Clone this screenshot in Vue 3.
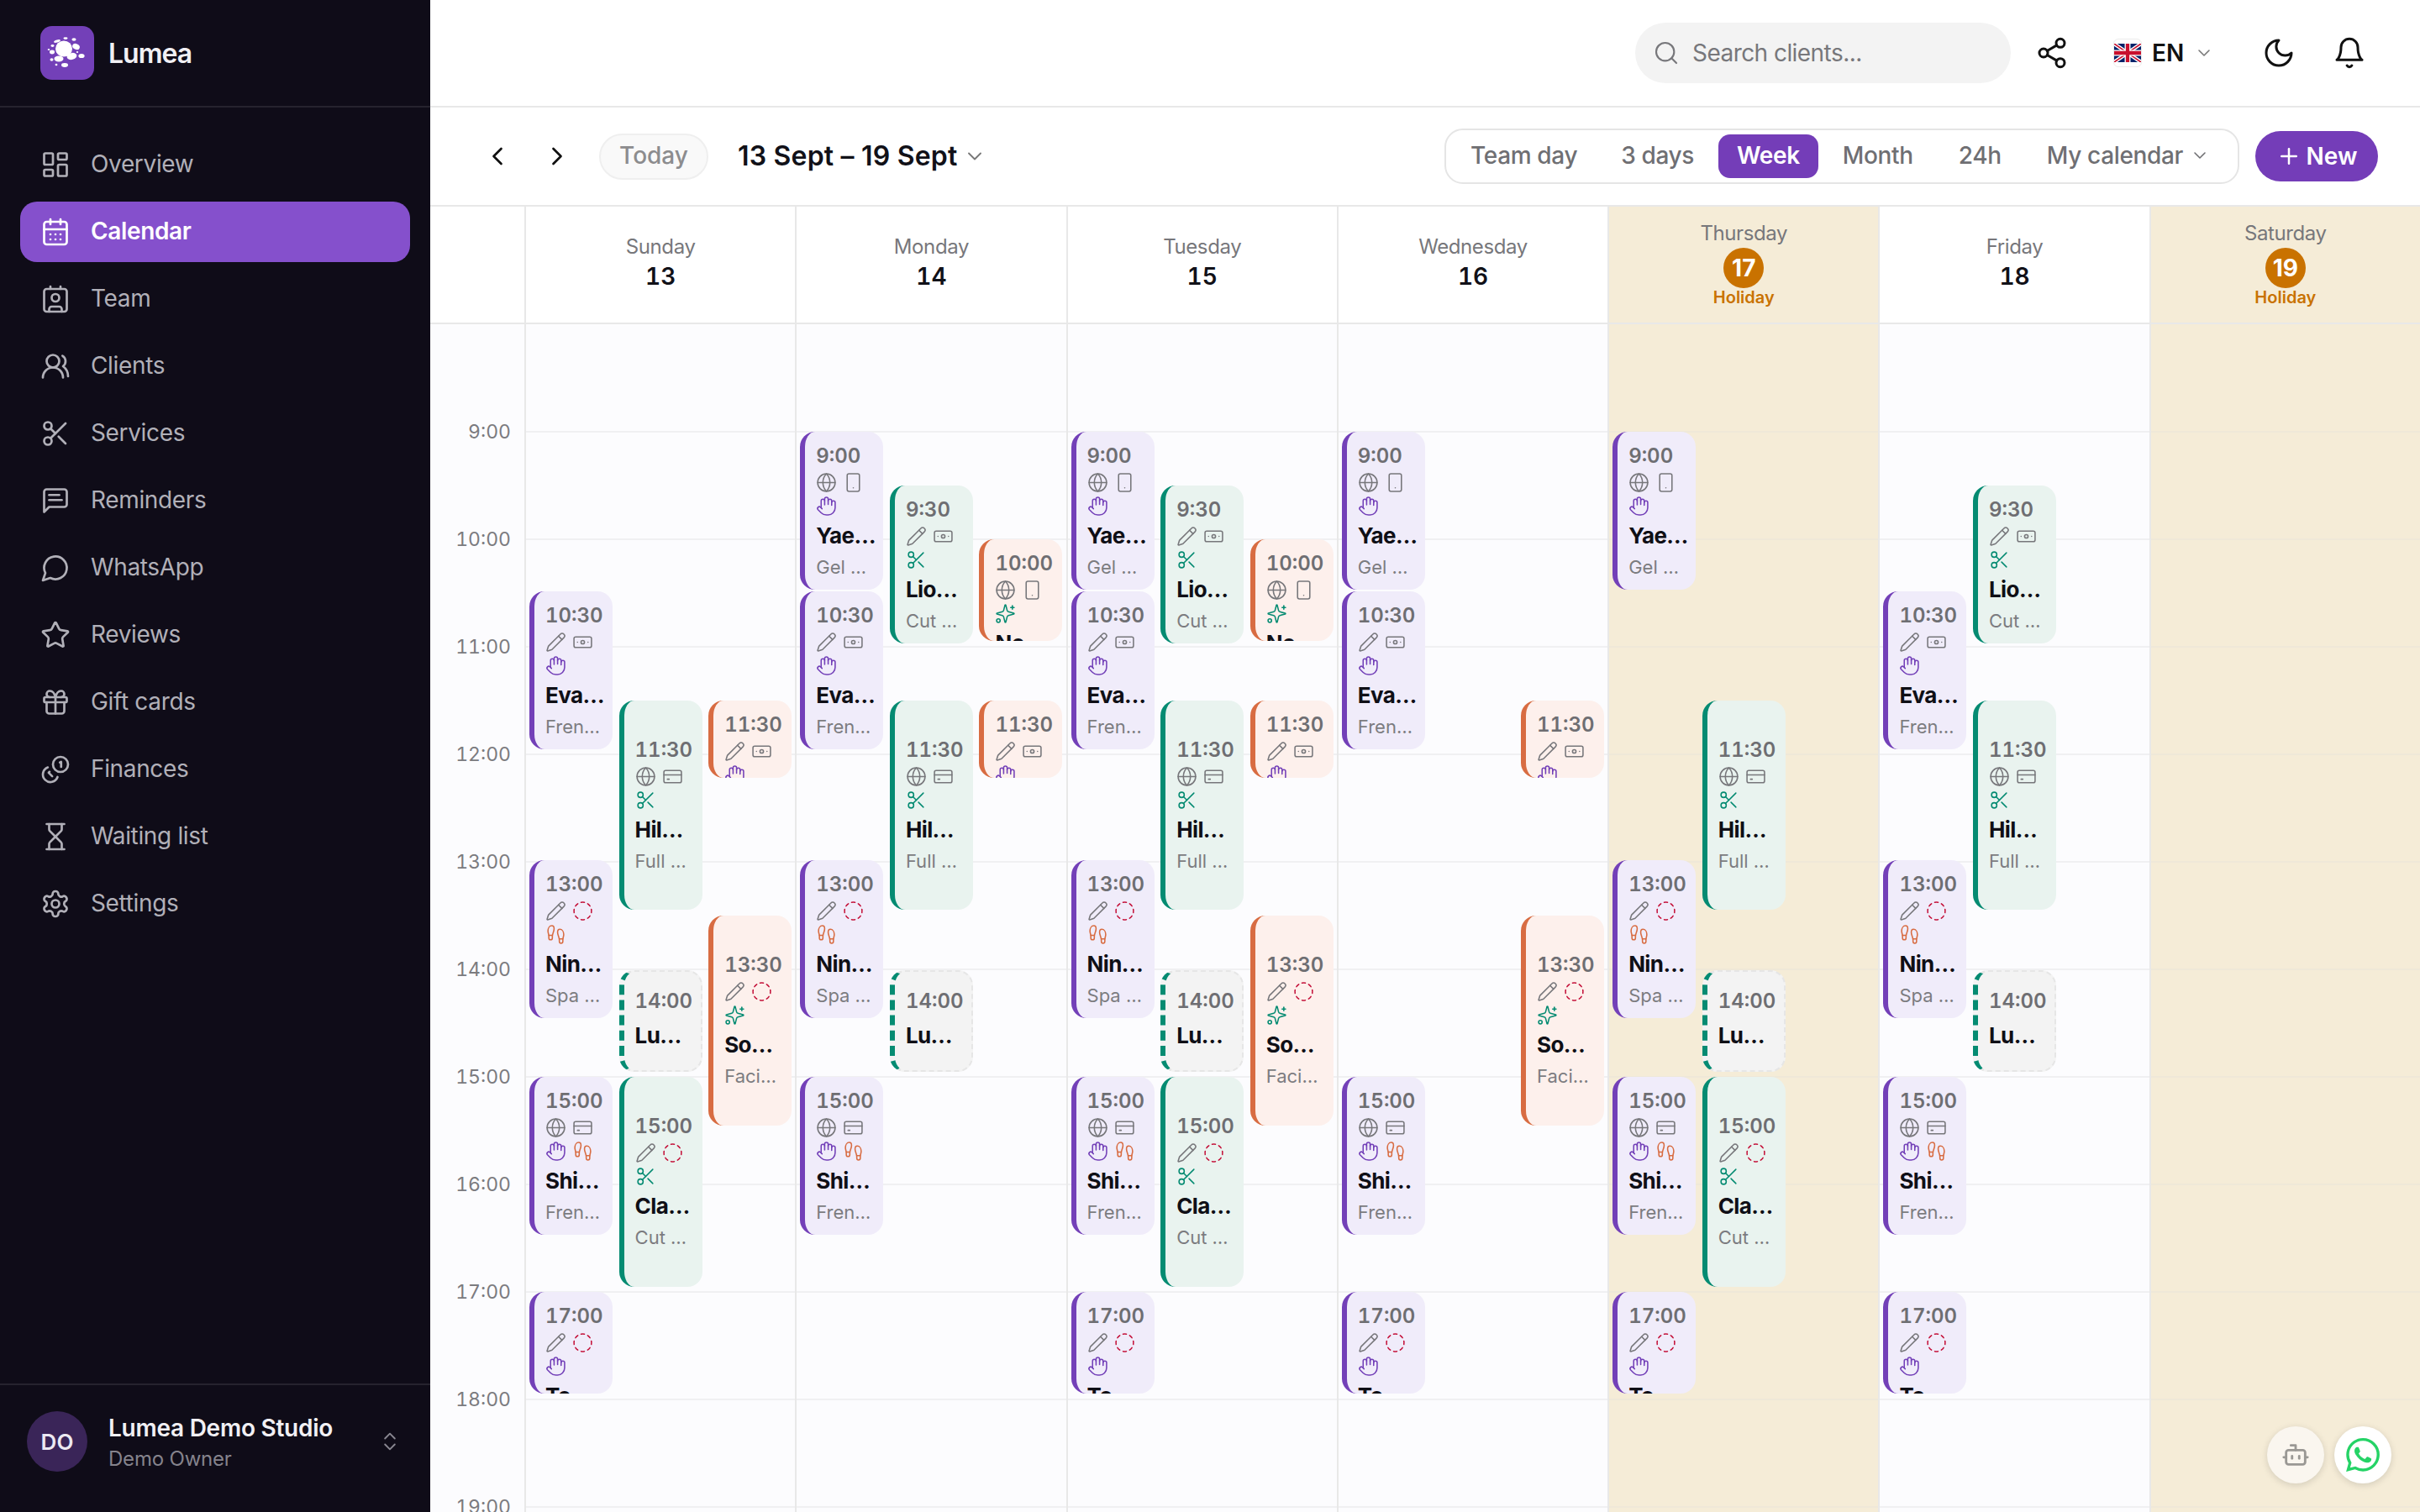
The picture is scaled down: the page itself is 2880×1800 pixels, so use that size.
<script setup>
const icons = {
  overview: ['M4 3h5a1 1 0 0 1 1 1v7a1 1 0 0 1-1 1H4a1 1 0 0 1-1-1V4a1 1 0 0 1 1-1z', 'M15 3h5a1 1 0 0 1 1 1v3a1 1 0 0 1-1 1h-5a1 1 0 0 1-1-1V4a1 1 0 0 1 1-1z', 'M15 12h5a1 1 0 0 1 1 1v7a1 1 0 0 1-1 1h-5a1 1 0 0 1-1-1v-7a1 1 0 0 1 1-1z', 'M4 16h5a1 1 0 0 1 1 1v3a1 1 0 0 1-1 1H4a1 1 0 0 1-1-1v-3a1 1 0 0 1 1-1z'],
  calendar: ['M8 2v4', 'M16 2v4', 'M5 4h14a2 2 0 0 1 2 2v14a2 2 0 0 1-2 2H5a2 2 0 0 1-2-2V6a2 2 0 0 1 2-2z', 'M3 10h18', 'M8 14h.01', 'M12 14h.01', 'M16 14h.01', 'M8 18h.01', 'M12 18h.01', 'M16 18h.01'],
  team: ['M16 2v2', 'M7 22v-2a2 2 0 0 1 2-2h6a2 2 0 0 1 2 2v2', 'M8 2v2', 'M12 8a3 3 0 1 1 0 6 3 3 0 0 1 0-6z', 'M5 4h14a2 2 0 0 1 2 2v14a2 2 0 0 1-2 2H5a2 2 0 0 1-2-2V6a2 2 0 0 1 2-2z'],
  clients: ['M18 21a8 8 0 0 0-16 0', 'M10 3a5 5 0 1 1 0 10 5 5 0 0 1 0-10z', 'M22 20c0-3.37-2-6.5-4-8a5 5 0 0 0-.45-8.3'],
  scissors: ['M6 3a3 3 0 1 1 0 6 3 3 0 0 1 0-6z', 'M6 15a3 3 0 1 1 0 6 3 3 0 0 1 0-6z', 'M20 4 8.12 15.88', 'M14.47 14.48 20 20', 'M8.12 8.12 12 12'],
  reminders: ['M21 15a2 2 0 0 1-2 2H7l-4 4V5a2 2 0 0 1 2-2h14a2 2 0 0 1 2 2z', 'M15 7.5H7', 'M17 11.5H7'],
  whatsapp: ['M7.9 20A9 9 0 1 0 4 16.1L2 22Z'],
  star: ['M11.525 2.295a.53.53 0 0 1 .95 0l2.31 4.679a2.123 2.123 0 0 0 1.595 1.16l5.166.756a.53.53 0 0 1 .294.904l-3.736 3.638a2.123 2.123 0 0 0-.611 1.878l.882 5.14a.53.53 0 0 1-.771.56l-4.618-2.428a2.122 2.122 0 0 0-1.973 0L6.396 21.01a.53.53 0 0 1-.77-.56l.881-5.139a2.122 2.122 0 0 0-.611-1.879L2.16 9.795a.53.53 0 0 1 .294-.906l5.165-.755a2.122 2.122 0 0 0 1.597-1.16z'],
  gift: ['M4 8h16a1 1 0 0 1 1 1v2a1 1 0 0 1-1 1H4a1 1 0 0 1-1-1V9a1 1 0 0 1 1-1z', 'M12 8v13', 'M19 12v7a2 2 0 0 1-2 2H7a2 2 0 0 1-2-2v-7', 'M7.5 8a2.5 2.5 0 0 1 0-5A4.8 8 0 0 1 12 8a4.8 8 0 0 1 4.5-5 2.5 2.5 0 0 1 0 5'],
  coins: ['M16 2a6 6 0 1 1 0 12 6 6 0 0 1 0-12z', 'M5.91 10.37A6 6 0 1 0 13.66 18', 'M15.5 6.5 16.5 6v4', 'M7.29 13.88l-.7.71 2.82 2.82'],
  hourglass: ['M5 22h14', 'M5 2h14', 'M17 22v-4.172a2 2 0 0 0-.586-1.414L12 12l-4.414 4.414A2 2 0 0 0 7 17.828V22', 'M7 2v4.172a2 2 0 0 0 .586 1.414L12 12l4.414-4.414A2 2 0 0 0 17 6.172V2'],
  settings: ['M12.22 2h-.44a2 2 0 0 0-2 2v.18a2 2 0 0 1-1 1.73l-.43.25a2 2 0 0 1-2 0l-.15-.08a2 2 0 0 0-2.73.73l-.22.38a2 2 0 0 0 .73 2.73l.15.1a2 2 0 0 1 1 1.72v.51a2 2 0 0 1-1 1.74l-.15.09a2 2 0 0 0-.73 2.73l.22.38a2 2 0 0 0 2.73.73l.15-.08a2 2 0 0 1 2 0l.43.25a2 2 0 0 1 1 1.73V20a2 2 0 0 0 2 2h.44a2 2 0 0 0 2-2v-.18a2 2 0 0 1 1-1.73l.43-.25a2 2 0 0 1 2 0l.15.08a2 2 0 0 0 2.73-.73l.22-.39a2 2 0 0 0-.73-2.73l-.15-.08a2 2 0 0 1-1-1.74v-.5a2 2 0 0 1 1-1.74l.15-.09a2 2 0 0 0 .73-2.73l-.22-.38a2 2 0 0 0-2.73-.73l-.15.08a2 2 0 0 1-2 0l-.43-.25a2 2 0 0 1-1-1.73V4a2 2 0 0 0-2-2z', 'M12 9a3 3 0 1 1 0 6 3 3 0 0 1 0-6z'],
  search: ['M11 3a8 8 0 1 1 0 16 8 8 0 0 1 0-16z', 'm21 21-4.3-4.3'],
  share: ['M18 2a3 3 0 1 1 0 6 3 3 0 0 1 0-6z', 'M6 9a3 3 0 1 1 0 6 3 3 0 0 1 0-6z', 'M18 16a3 3 0 1 1 0 6 3 3 0 0 1 0-6z', 'm8.59 13.51 6.83 3.98', 'm15.41 6.51-6.82 3.98'],
  moon: ['M12 3a6 6 0 0 0 9 9 9 9 0 1 1-9-9Z'],
  bell: ['M6 8a6 6 0 0 1 12 0c0 7 3 9 3 9H3s3-2 3-9', 'M10.3 21a1.94 1.94 0 0 0 3.4 0'],
  down: ['m6 9 6 6 6-6'],
  left: ['m15 18-6-6 6-6'],
  right: ['m9 18 6-6-6-6'],
  updown: ['m7 15 5 5 5-5', 'm7 9 5-5 5 5'],
  plus: ['M5 12h14', 'M12 5v14'],
  globe: ['M12 2a10 10 0 1 1 0 20 10 10 0 0 1 0-20z', 'M12 2a14.5 14.5 0 0 0 0 20 14.5 14.5 0 0 0 0-20', 'M2 12h20'],
  tablet: ['M7 2h10a2 2 0 0 1 2 2v16a2 2 0 0 1-2 2H7a2 2 0 0 1-2-2V4a2 2 0 0 1 2-2z', 'M12 18h.01'],
  pencil: ['M21.174 6.812a1 1 0 0 0-3.986-3.987L3.842 16.174a2 2 0 0 0-.5.83l-1.321 4.352a.5.5 0 0 0 .623.622l4.353-1.32a2 2 0 0 0 .83-.497z', 'm15 5 4 4'],
  cash: ['M4 6h16a2 2 0 0 1 2 2v8a2 2 0 0 1-2 2H4a2 2 0 0 1-2-2V8a2 2 0 0 1 2-2z', 'M12 10a2 2 0 1 1 0 4 2 2 0 0 1 0-4z', 'M6 12h.01', 'M18 12h.01'],
  card: ['M4 5h16a2 2 0 0 1 2 2v10a2 2 0 0 1-2 2H4a2 2 0 0 1-2-2V7a2 2 0 0 1 2-2z', 'M2 10h20', 'M6 15h2'],
  hand: ['M18 11V6a2 2 0 0 0-4 0', 'M14 10V4a2 2 0 0 0-4 0v2', 'M10 10.5V6a2 2 0 0 0-4 0v8', 'M18 8a2 2 0 1 1 4 0v6a8 8 0 0 1-8 8h-2c-2.8 0-4.5-.86-5.99-2.34l-3.6-3.6a2 2 0 0 1 2.83-2.82L7 15'],
  feet: ['M4 16v-2.38C4 11.5 2.97 10.5 3 8c.03-2.72 1.49-6 4.5-6C9.37 2 10 3.8 10 5.5c0 3.11-2 5.66-2 8.68V16a2 2 0 1 1-4 0Z', 'M20 20v-2.38c0-2.12 1.03-3.12 1-5.62-.03-2.72-1.49-6-4.5-6C14.63 6 14 7.8 14 9.5c0 3.11 2 5.66 2 8.68V20a2 2 0 1 0 4 0Z', 'M16 17h4', 'M4 13h4'],
  sparkle: ['M9.937 15.5A2 2 0 0 0 8.5 14.063l-6.135-1.582a.5.5 0 0 1 0-.962L8.5 9.936A2 2 0 0 0 9.937 8.5l1.582-6.135a.5.5 0 0 1 .963 0L14.063 8.5A2 2 0 0 0 15.5 9.937l6.135 1.581a.5.5 0 0 1 0 .964L15.5 14.063a2 2 0 0 0-1.437 1.437l-1.582 6.135a.5.5 0 0 1-.963 0z', 'M20 3v4', 'M22 5h-4', 'M4 18a2 2 0 1 1 0 4 2 2 0 0 1 0-4z'],
  dashed: ['M10.1 2.182a10 10 0 0 1 3.8 0', 'M13.9 21.818a10 10 0 0 1-3.8 0', 'M17.609 3.721a10 10 0 0 1 2.69 2.7', 'M2.182 13.9a10 10 0 0 1 0-3.8', 'M20.279 17.609a10 10 0 0 1-2.7 2.69', 'M21.818 10.1a10 10 0 0 1 0 3.8', 'M3.721 6.391a10 10 0 0 1 2.7-2.69', 'M6.391 20.279a10 10 0 0 1-2.69-2.7'],
  bot: ['M12 8V4H8', 'M6 8h12a2 2 0 0 1 2 2v8a2 2 0 0 1-2 2H6a2 2 0 0 1-2-2v-8a2 2 0 0 1 2-2z', 'M2 14h2', 'M20 14h2', 'M15 13v2', 'M9 13v2'],
}

const tone = { hand: 'i-violet', feet: 'i-coral', scissors: 'i-green', sparkle: 'i-green', dashed: 'i-red' }

const nav = [
  { label: 'Overview', icon: 'overview' },
  { label: 'Calendar', icon: 'calendar', active: true },
  { label: 'Team', icon: 'team' },
  { label: 'Clients', icon: 'clients' },
  { label: 'Services', icon: 'scissors' },
  { label: 'Reminders', icon: 'reminders' },
  { label: 'WhatsApp', icon: 'whatsapp' },
  { label: 'Reviews', icon: 'star' },
  { label: 'Gift cards', icon: 'gift' },
  { label: 'Finances', icon: 'coins' },
  { label: 'Waiting list', icon: 'hourglass' },
  { label: 'Settings', icon: 'settings' },
]

const views = ['Team day', '3 days', 'Week', 'Month', '24h']

const base = {
  yae: { time: '9:00', top: 514, h: 188, tone: 'violet', lane: 0, icons: ['globe', 'tablet', 'hand'], name: 'Yae…', sub: 'Gel …' },
  lio: { time: '9:30', top: 578, h: 188, tone: 'green', lane: 1, icons: ['pencil', 'cash', 'scissors'], name: 'Lio…', sub: 'Cut …' },
  noa: { time: '10:00', top: 642, h: 121, tone: 'coral', lane: 2, icons: ['globe', 'tablet', 'sparkle'], name: 'No…', sub: 'Faci…' },
  eva: { time: '10:30', top: 704, h: 188, tone: 'violet', lane: 0, icons: ['pencil', 'cash', 'hand'], name: 'Eva…', sub: 'Fren…' },
  hil: { time: '11:30', top: 834, h: 249, tone: 'green', lane: 1, icons: ['globe', 'card', 'scissors'], name: 'Hil…', sub: 'Full …' },
  mar: { time: '11:30', top: 834, h: 92, tone: 'coral', lane: 2, icons: ['pencil', 'cash', 'hand'], name: 'Ma…', sub: 'Fren…' },
  nin: { time: '13:00', top: 1024, h: 188, tone: 'violet', lane: 0, icons: ['pencil', 'dashed', 'feet'], name: 'Nin…', sub: 'Spa …' },
  sof: { time: '13:30', top: 1090, h: 250, tone: 'coral', lane: 2, icons: ['pencil', 'dashed', 'sparkle'], name: 'So…', sub: 'Faci…' },
  luc: { time: '14:00', top: 1155, h: 121, tone: 'green', lane: 1, icons: [], name: 'Lu…', draft: true },
  shi: { time: '15:00', top: 1282, h: 188, tone: 'violet', lane: 0, icons: ['globe', 'card', 'hand', 'feet'], name: 'Shi…', sub: 'Fren…' },
  cla: { time: '15:00', top: 1282, h: 250, tone: 'green', lane: 1, icons: ['pencil', 'dashed', 'scissors'], name: 'Cla…', sub: 'Cut …' },
  tom: { time: '17:00', top: 1538, h: 121, tone: 'violet', lane: 0, icons: ['pencil', 'dashed', 'hand'], name: 'To…', sub: 'Gel …' },
}

const days = [
  { name: 'Sunday', num: 13, ev: ['eva', 'hil', 'mar', 'nin', 'sof', 'luc', 'shi', 'cla', 'tom'] },
  { name: 'Monday', num: 14, ev: ['yae', 'lio', 'noa', 'eva', 'hil', 'mar', 'nin', 'luc', 'shi'] },
  { name: 'Tuesday', num: 15, ev: ['yae', 'lio', 'noa', 'eva', 'hil', 'mar', 'nin', 'sof', 'luc', 'shi', 'cla', 'tom'] },
  { name: 'Wednesday', num: 16, ev: ['yae', 'eva', 'mar', 'sof', 'shi', 'tom'] },
  { name: 'Thursday', num: 17, holiday: true, ev: ['yae', 'hil', 'nin', 'luc', 'shi', 'cla', 'tom'] },
  { name: 'Friday', num: 18, ev: ['lio', 'eva', 'hil', 'nin', 'luc', 'shi', 'tom'] },
  { name: 'Saturday', num: 19, holiday: true, ev: [] },
]

const hours = ['9:00', '10:00', '11:00', '12:00', '13:00', '14:00', '15:00', '16:00', '17:00', '18:00', '19:00']
const slots = Array.from({ length: 12 }, (_, i) => i)

function place(e) {
  return {
    top: e.top - 386 + 'px',
    height: e.h + 'px',
    left: 4 + e.lane * 106.6 + 'px',
  }
}
</script>

<template>
  <div class="app">
    <aside class="side">
      <div class="brand">
        <div class="logo">
          <svg viewBox="0 0 64 64" width="64" height="64" fill="#fff">
            <ellipse cx="28" cy="27" rx="10" ry="9.5" />
            <ellipse cx="37.5" cy="36" rx="6" ry="4" transform="rotate(-15 37.5 36)" />
            <ellipse cx="49" cy="35.5" rx="3.6" ry="2.6" />
            <ellipse cx="29" cy="46.5" rx="4" ry="2.4" />
            <ellipse cx="22" cy="39" rx="5.5" ry="3.4" />
            <ellipse cx="14" cy="31" rx="3" ry="2.4" />
            <ellipse cx="42.5" cy="24.5" rx="4.5" ry="3.4" transform="rotate(25 42.5 24.5)" />
            <ellipse cx="40" cy="16" rx="2.6" ry="1.8" />
            <ellipse cx="30" cy="14.6" rx="2.6" ry="1.3" />
            <ellipse cx="20" cy="18" rx="4" ry="1.5" transform="rotate(-15 20 18)" />
            <ellipse cx="14.5" cy="23.5" rx="2" ry="1.4" />
            <ellipse cx="13.5" cy="40" rx="2" ry="1.8" />
            <ellipse cx="10" cy="28" rx="1.3" ry="1" />
            <ellipse cx="44" cy="31" rx="1.2" ry="1" />
            <ellipse cx="19" cy="46" rx="1.4" ry="1.2" />
          </svg>
        </div>
        <span class="brand-name">Lumea</span>
      </div>
      <nav class="nav">
        <a v-for="n in nav" :key="n.label" class="nav-item" :class="{ active: n.active }">
          <svg class="ic nav-ic" viewBox="0 0 24 24"><path v-for="d in icons[n.icon]" :key="d" :d="d" /></svg>
          <span class="nav-label">{{ n.label }}</span>
        </a>
      </nav>
      <div class="user">
        <div class="avatar">DO</div>
        <div class="user-text">
          <div class="user-name">Lumea Demo Studio</div>
          <div class="user-role">Demo Owner</div>
        </div>
        <svg class="ic updown" viewBox="0 0 24 24"><path v-for="d in icons.updown" :key="d" :d="d" /></svg>
      </div>
    </aside>

    <main class="main">
      <header class="top">
        <div class="search">
          <svg class="ic search-ic" viewBox="0 0 24 24"><path v-for="d in icons.search" :key="d" :d="d" /></svg>
          <span>Search clients...</span>
        </div>
        <svg class="ic top-ic share" viewBox="0 0 24 24"><path v-for="d in icons.share" :key="d" :d="d" /></svg>
        <div class="lang">
          <span class="flag">
            <svg viewBox="0 0 60 40" width="33" height="22" preserveAspectRatio="none">
              <rect width="60" height="40" fill="#012169" />
              <path d="M0 0 60 40M60 0 0 40" stroke="#fff" stroke-width="8" />
              <path d="M0 0 60 40M60 0 0 40" stroke="#c8102e" stroke-width="3" />
              <path d="M30 0v40M0 20h60" stroke="#fff" stroke-width="13" />
              <path d="M30 0v40M0 20h60" stroke="#c8102e" stroke-width="8" />
            </svg>
          </span>
          <b>EN</b>
          <svg class="ic lang-down" viewBox="0 0 24 24"><path v-for="d in icons.down" :key="d" :d="d" /></svg>
        </div>
        <svg class="ic top-ic moon" viewBox="0 0 24 24"><path v-for="d in icons.moon" :key="d" :d="d" /></svg>
        <svg class="ic top-ic bell" viewBox="0 0 24 24"><path v-for="d in icons.bell" :key="d" :d="d" /></svg>
      </header>

      <section class="tools">
        <svg class="ic arrow" viewBox="0 0 24 24"><path v-for="d in icons.left" :key="d" :d="d" /></svg>
        <svg class="ic arrow next" viewBox="0 0 24 24"><path v-for="d in icons.right" :key="d" :d="d" /></svg>
        <button class="today">Today</button>
        <div class="range">13 Sept – 19 Sept</div>
        <svg class="ic range-down" viewBox="0 0 24 24"><path v-for="d in icons.down" :key="d" :d="d" /></svg>
        <div class="seg">
          <span v-for="v in views" :key="v" class="seg-item" :class="{ on: v === 'Week', first: v === 'Team day' }">{{ v }}</span>
          <span class="seg-item mine">My calendar
            <svg class="ic seg-down" viewBox="0 0 24 24"><path v-for="d in icons.down" :key="d" :d="d" /></svg>
          </span>
        </div>
        <button class="new">
          <svg class="ic new-ic" viewBox="0 0 24 24"><path v-for="d in icons.plus" :key="d" :d="d" /></svg>New
        </button>
      </section>

      <section class="cal-head">
        <div class="gut-head"></div>
        <div v-for="d in days" :key="d.name" class="day-head" :class="{ holiday: d.holiday }">
          <div class="day-name">{{ d.name }}</div>
          <div v-if="d.holiday" class="day-badge">{{ d.num }}</div>
          <div v-else class="day-num">{{ d.num }}</div>
          <div v-if="d.holiday" class="day-tag">Holiday</div>
        </div>
      </section>

      <section class="cal-body">
        <div class="gutter">
          <div v-for="h in hours" :key="h" class="hour">{{ h }}</div>
        </div>
        <div v-for="d in days" :key="d.name" class="col" :class="{ holiday: d.holiday }">
          <div v-for="s in slots" :key="s" class="slot"></div>
          <article
            v-for="k in d.ev"
            :key="k"
            class="ev"
            :class="['t-' + base[k].tone, { draft: base[k].draft }]"
            :style="place(base[k])"
          >
            <div class="ev-time">{{ base[k].time }}</div>
            <div v-if="base[k].icons.length" class="ev-icons">
              <svg
                v-for="i in base[k].icons"
                :key="i"
                class="ic ev-ic"
                :class="tone[i]"
                viewBox="0 0 24 24"
              ><path v-for="p in icons[i]" :key="p" :d="p" /></svg>
            </div>
            <div class="ev-name">{{ base[k].name }}</div>
            <div v-if="base[k].sub" class="ev-sub">{{ base[k].sub }}</div>
          </article>
        </div>
      </section>

      <div class="fabs">
        <div class="fab bot">
          <svg class="ic" viewBox="0 0 24 24" width="34" height="34"><path v-for="d in icons.bot" :key="d" :d="d" /></svg>
        </div>
        <div class="fab wa">
          <svg viewBox="0 0 24 24" width="40" height="40" fill="#25d366"><path d="M17.472 14.382c-.297-.149-1.758-.867-2.03-.967-.273-.099-.471-.148-.67.15-.197.297-.767.966-.94 1.164-.173.199-.347.223-.644.075-.297-.15-1.255-.463-2.39-1.475-.883-.788-1.48-1.761-1.653-2.059-.173-.297-.018-.458.13-.606.134-.133.298-.347.446-.52.149-.174.198-.298.298-.497.099-.198.05-.371-.025-.52-.075-.149-.669-1.612-.916-2.207-.242-.579-.487-.5-.669-.51-.173-.008-.371-.01-.57-.01-.198 0-.52.074-.792.372-.272.297-1.04 1.016-1.04 2.479 0 1.462 1.065 2.875 1.213 3.074.149.198 2.096 3.2 5.077 4.487.709.306 1.262.489 1.694.625.712.227 1.36.195 1.871.118.571-.085 1.758-.719 2.006-1.413.248-.694.248-1.289.173-1.413-.074-.124-.272-.198-.57-.347m-5.421 7.403h-.004a9.87 9.87 0 01-5.031-1.378l-.361-.214-3.741.982.998-3.648-.235-.374a9.86 9.86 0 01-1.51-5.26c.001-5.45 4.436-9.884 9.888-9.884 2.64 0 5.122 1.03 6.988 2.898a9.825 9.825 0 012.893 6.994c-.003 5.45-4.437 9.884-9.885 9.884m8.413-18.297A11.815 11.815 0 0012.05 0C5.495 0 .16 5.335.157 11.892c0 2.096.547 4.142 1.588 5.945L.057 24l6.305-1.654a11.882 11.882 0 005.683 1.448h.005c6.554 0 11.89-5.335 11.893-11.893a11.821 11.821 0 00-3.48-8.413z" /></svg>
        </div>
      </div>
    </main>
  </div>
</template>

<style>
html, body { margin: 0; padding: 0; background: #fff; overflow: hidden; }
</style>

<style scoped>
* { box-sizing: border-box; }
.app {
  display: flex;
  width: 2880px;
  height: 1800px;
  overflow: hidden;
  font-family: Inter, "Noto Sans", sans-serif;
  color: #111118;
}
.ic { fill: none; stroke: currentColor; stroke-width: 2; stroke-linecap: round; stroke-linejoin: round; flex: none; }

/* sidebar */
.side { width: 512px; flex: none; background: #0f0c18; display: flex; flex-direction: column; }
.brand { height: 128px; flex: none; display: flex; align-items: center; padding-left: 48px; border-bottom: 2px solid #26232e; }
.logo { width: 64px; height: 64px; border-radius: 14px; background: #7340b8; }
.logo svg { display: block; }
.brand-name { margin-left: 17px; font-size: 32px; font-weight: 600; color: #f1f0f4; letter-spacing: -1px; }
.nav { display: flex; flex-direction: column; gap: 8px; padding: 32px 24px 0; flex: 1; }
.nav-item { height: 72px; border-radius: 20px; display: flex; align-items: center; padding-left: 24px; gap: 24px; font-size: 28px; color: #b1b0b8; letter-spacing: -0.35px; }
.nav-label { margin-top: -3px; }
.nav-item.active { background: #8550cc; color: #fff; font-weight: 600; }
.nav-ic { width: 36px; height: 36px; stroke-width: 1.8; }
.user { height: 153px; flex: none; border-top: 2px solid #26232e; display: flex; align-items: flex-start; padding: 31px 0 0 32px; }
.avatar { width: 72px; height: 72px; border-radius: 50%; background: #3a2558; color: #ece9f2; font-size: 26px; font-weight: 600; display: flex; align-items: center; justify-content: center; flex: none; }
.user-text { margin-left: 25px; flex: 1; margin-top: 1px; }
.user-name { font-size: 28px; font-weight: 600; line-height: 38px; color: #f1f0f4; letter-spacing: -0.25px; }
.user-role { font-size: 24px; line-height: 36px; color: #85838c; letter-spacing: -0.2px; }
.updown { width: 28px; height: 28px; color: #8a8892; margin: 22px 34px 0 0; stroke-width: 1.6; }

/* main */
.main { flex: 1; min-width: 0; display: flex; flex-direction: column; position: relative; }
.top { height: 128px; flex: none; border-bottom: 2px solid #e8e8e8; display: flex; align-items: center; padding-left: 1434px; }
.search { width: 447px; height: 72px; border-radius: 36px; background: #f3f3f3; display: flex; align-items: center; padding-left: 21px; font-size: 28px; color: #77777b; letter-spacing: -0.55px; }
.search-ic { width: 32px; height: 32px; margin-right: 15px; stroke-width: 1.6; }
.top-ic { width: 40px; height: 40px; color: #111; stroke-width: 1.8; }
.share { margin-left: 29px; }
.lang { display: flex; align-items: center; margin-left: 53px; }
.flag { width: 34px; height: 34px; border: 1px solid #ececec; border-radius: 6px; display: flex; align-items: center; justify-content: center; overflow: hidden; }
.lang b { margin-left: 12px; font-size: 28px; font-weight: 600; color: #111; }
.lang-down { width: 24px; height: 24px; margin-left: 12px; color: #777; stroke-width: 1.6; }
.moon { margin-left: 57px; }
.bell { margin-left: 44px; }

.tools { height: 118px; flex: none; border-bottom: 2px solid #e8e8e8; display: flex; align-items: center; padding-left: 62px; }
.arrow { width: 36px; height: 36px; color: #111; stroke-width: 1.8; }
.arrow.next { margin-left: 35px; }
.today { margin-left: 32px; width: 130px; height: 55px; border: 2px solid #efefef; border-radius: 28px; background: #f9f9f9; color: #8c8c8e; font: 500 28px Inter, sans-serif; padding: 0 0 2px; }
.range { margin-left: 35px; font-size: 32px; font-weight: 600; color: #111118; letter-spacing: 0.2px; padding-bottom: 2px; }
.range-down { width: 28px; height: 28px; margin-left: 6px; color: #777; stroke-width: 1.6; }
.seg { margin-left: auto; height: 66px; border: 2px solid #e5e5e5; border-radius: 22px; display: flex; align-items: center; padding: 0 4px; gap: 4px; }
.seg-item { height: 52px; padding: 0 25px 2px; display: flex; align-items: center; font-size: 28px; font-weight: 500; color: #6f6f73; border-radius: 14px; white-space: nowrap; letter-spacing: -0.35px; }
.seg-item.first { padding-right: 23px; }
.seg-item.mine { padding-right: 29px; }
.seg-item.on { background: #743db8; color: #fff; font-weight: 600; padding: 0 22px 2px; }
.seg-down { width: 24px; height: 24px; margin-left: 8px; stroke-width: 1.6; }
.new { margin: 0 50px 0 19px; width: 146px; height: 60px; border: 0; border-radius: 30px; background: #743db8; color: #fff; font: 600 28px Inter, sans-serif; display: flex; align-items: center; justify-content: center; gap: 6px; padding: 0; }
.new-ic { width: 30px; height: 30px; }

.cal-head { height: 140px; flex: none; display: grid; grid-template-columns: 112px repeat(7, 1fr); border-bottom: 2px solid #e8e8e8; }
.day-head { border-left: 2px solid #e8e8e8; display: flex; flex-direction: column; align-items: center; justify-content: center; padding-bottom: 4px; }
.day-head.holiday { background: #f5ecd7; padding-bottom: 5px; }
.day-name { font-size: 24px; line-height: 32px; color: #77777b; letter-spacing: -0.4px; }
.holiday .day-name { line-height: 34px; }
.day-num { font-size: 28px; font-weight: 600; line-height: 38px; color: #111118; font-variant-numeric: tabular-nums; }
.day-badge { width: 48px; height: 48px; border-radius: 50%; background: #c97200; color: #fff; font-size: 28px; font-weight: 700; display: flex; align-items: center; justify-content: center; }
.day-tag { font-size: 20px; font-weight: 600; line-height: 22px; color: #c97200; }

.cal-body { flex: 1; min-height: 0; overflow: hidden; display: grid; grid-template-columns: 112px repeat(7, 1fr); }
.gutter { padding-top: 64px; background: #fcfcfe; }
.hour { height: 128px; line-height: 128px; text-align: right; padding-right: 16px; font-size: 23px; color: #7b7b7f; font-variant-numeric: tabular-nums; }
.col { position: relative; background: #fcfcfe; border-left: 2px solid #e8e8e8; min-width: 0; }
.col.holiday { background: #f5ecd7; }
.slot { height: 128px; border-bottom: 2px solid #f0f0f2; }
.slot:first-child { height: 129px; }
.col.holiday .slot { border-bottom-color: #efe8d8; }

.ev {
  position: absolute;
  width: 99px;
  border-radius: 18px;
  border-left: 6px solid;
  padding: 14px 4px 14px 13px;
  overflow: hidden;
  display: flex;
  flex-direction: column;
  justify-content: safe center;
}
.t-violet { background: #f0ecfa; border-left-color: #7340b8; }
.t-green { background: #e9f3ef; border-left-color: #058b72; }
.t-coral { background: #fdf0ec; border-left-color: #d86c42; }
.ev.draft { background: #f3f3f3; border: 2px dashed #e6e6e6; border-left: 6px dashed #058b72; padding-bottom: 20px; }
.ev-time { font-size: 24px; font-weight: 600; line-height: 30px; color: #6e6e72; flex: none; white-space: nowrap; font-variant-numeric: tabular-nums; }
.ev-icons { display: flex; flex-wrap: wrap; gap: 3px 7px; flex: none; margin: 4px 0 7px; }
.ev-ic { width: 25px; height: 25px; color: #77777b; stroke-width: 1.5; }
.i-violet { color: #7340b8; }
.i-coral { color: #d86c42; }
.i-green { color: #058b72; }
.i-red { color: #c4123a; }
.ev-name { font-size: 26px; font-weight: 700; line-height: 32px; color: #0f0f16; white-space: nowrap; flex: none; letter-spacing: -0.6px; }
.draft .ev-name { margin-top: 10px; }
.ev-sub { font-size: 22px; line-height: 30px; margin-top: 6px; color: #7c7c80; white-space: nowrap; flex: none; }

.fabs { position: absolute; right: 34px; bottom: 34px; display: flex; gap: 12px; }
.fab { width: 68px; height: 68px; border-radius: 50%; display: flex; align-items: center; justify-content: center; box-shadow: 0 2px 8px rgba(0, 0, 0, .14); }
.fab.bot { background: #faf6ef; color: #9a9894; }
.fab.wa { background: #fff; }
</style>
